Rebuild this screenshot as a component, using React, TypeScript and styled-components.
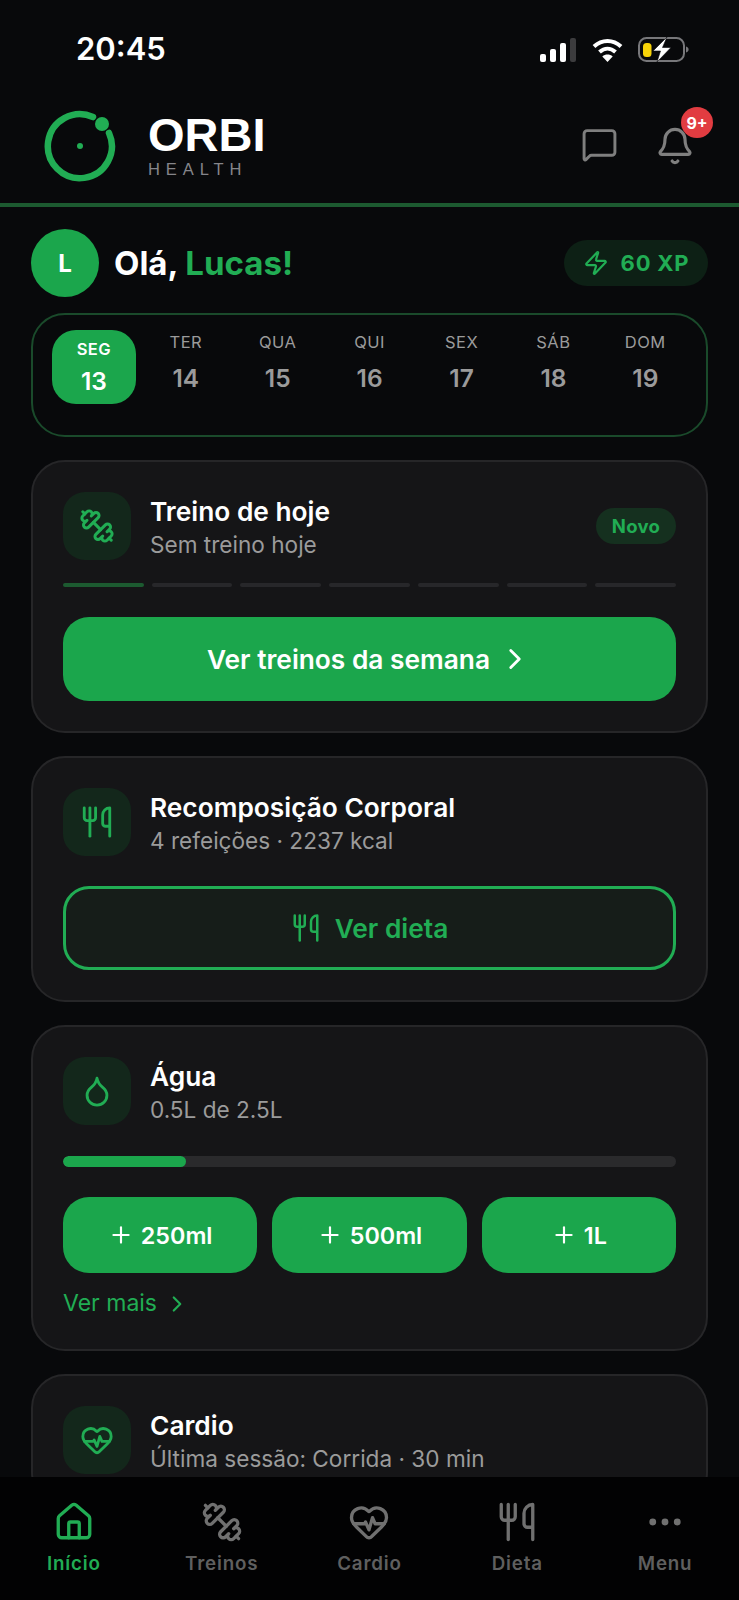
import React from 'react';
import styled, { createGlobalStyle } from 'styled-components';
import { Bell, ChevronRight, Droplet, Dumbbell, Ellipsis, HeartPulse, House, MessageSquare, Plus, Utensils, Zap } from 'lucide-react';

const GREEN = '#1ba64c';
const GREEN_TEXT = '#21ad54';
const GREY = '#9b9b9b';

const GlobalStyle = createGlobalStyle`
  html, body {
    margin: 0;
    padding: 0;
    background: #08090b;
  }
  * {
    box-sizing: border-box;
  }
`;

const Screen = styled.div`
  width: 739px;
  height: 1600px;
  display: flex;
  flex-direction: column;
  overflow: hidden;
  background: #08090b;
  color: #fff;
  font-family: 'Inter', 'Liberation Sans', sans-serif;
`;

const StatusBar = styled.div`
  height: 100px;
  flex: none;
  display: flex;
  justify-content: space-between;
  align-items: flex-start;
  padding: 30px 50px 0 76px;
`;

const Clock = styled.span`
  font-size: 31px;
  font-weight: 600;
  line-height: 38px;
`;

const StatusIcons = styled.div`
  display: flex;
  align-items: center;
  gap: 15px;
  padding-top: 7px;
`;

const Header = styled.header`
  height: 107px;
  flex: none;
  display: flex;
  align-items: flex-start;
  justify-content: space-between;
  padding: 9px 44px 0 43px;
  border-bottom: 4px solid #1c5a30;
`;

const Brand = styled.div`
  display: flex;
  gap: 31px;
`;

const BrandName = styled.div`
  display: flex;
  flex-direction: column;
  padding-top: 2px;
`;

const BrandTitle = styled.span`
  font-family: 'Liberation Sans', sans-serif;
  font-weight: 700;
  font-size: 47px;
  line-height: 47px;
`;

const BrandSub = styled.span`
  font-family: 'Liberation Sans', sans-serif;
  font-size: 16.5px;
  line-height: 18px;
  letter-spacing: 5.9px;
  color: #85858a;
  margin-top: 2px;
`;

const HeaderActions = styled.div`
  display: flex;
  align-items: flex-start;
  gap: 37px;
  padding-top: 17px;
  color: #7f7f7f;
`;

const BellWrap = styled.div`
  position: relative;
  height: 40px;
`;

const Badge = styled.span`
  position: absolute;
  top: -19px;
  right: -18px;
  width: 32px;
  height: 31px;
  border-radius: 50%;
  background: #e13c41;
  color: #fff;
  font-size: 16px;
  font-weight: 700;
  display: flex;
  align-items: center;
  justify-content: center;
`;

const Main = styled.main`
  flex: 1;
  min-height: 0;
  overflow: hidden;
  padding: 22px 31px 0;
  display: flex;
  flex-direction: column;
`;

const Greeting = styled.div`
  display: flex;
  align-items: center;
  justify-content: space-between;
  margin-bottom: 16px;
`;

const GreetingLeft = styled.div`
  display: flex;
  align-items: center;
  gap: 15px;
`;

const Avatar = styled.div`
  width: 68px;
  height: 68px;
  border-radius: 50%;
  background: ${GREEN};
  display: flex;
  align-items: center;
  justify-content: center;
  font-size: 24px;
  font-weight: 700;
`;

const Hello = styled.h1`
  margin: 0;
  font-size: 33px;
  font-weight: 700;
  span {
    color: ${GREEN_TEXT};
  }
`;

const XpPill = styled.div`
  width: 144px;
  height: 46px;
  border-radius: 23px;
  background: #0d2015;
  color: ${GREEN_TEXT};
  display: flex;
  align-items: center;
  justify-content: center;
  gap: 12px;
  font-size: 22px;
  font-weight: 700;
  letter-spacing: 0.8px;
`;

const Calendar = styled.section`
  height: 124px;
  flex: none;
  margin-bottom: 23px;
  border: 2px solid #1a4a2b;
  border-radius: 34px;
  padding: 15px 19px;
  display: grid;
  grid-template-columns: repeat(7, 83.9px);
  gap: 8px;
  align-items: start;
`;

const Day = styled.div<{ $active?: boolean }>`
  height: 74px;
  border-radius: 24px;
  display: flex;
  flex-direction: column;
  align-items: center;
  padding-top: ${(p) => (p.$active ? '7px' : '0')};
  background: ${(p) => (p.$active ? GREEN : 'transparent')};
`;

const DayName = styled.span<{ $active?: boolean }>`
  font-size: 16.5px;
  line-height: 24px;
  letter-spacing: 0.5px;
  font-weight: ${(p) => (p.$active ? 600 : 400)};
  color: ${(p) => (p.$active ? '#fff' : GREY)};
`;

const DayNumber = styled.span<{ $active?: boolean }>`
  font-size: 24.5px;
  line-height: 30px;
  font-weight: 600;
  margin-top: ${(p) => (p.$active ? '5px' : '9px')};
  color: ${(p) => (p.$active ? '#fff' : GREY)};
`;

const Card = styled.section`
  flex: none;
  background: #151517;
  border: 2px solid #262628;
  border-radius: 34px;
  padding: 30px;
  margin-bottom: 23px;
`;

const CardHead = styled.div`
  display: flex;
  align-items: center;
  gap: 19px;
`;

const IconTile = styled.div`
  width: 68px;
  height: 68px;
  flex: none;
  border-radius: 22px;
  background: #13271b;
  color: ${GREEN_TEXT};
  display: flex;
  align-items: center;
  justify-content: center;
`;

const CardText = styled.div`
  flex: 1;
  display: flex;
  flex-direction: column;
  gap: 2px;
  padding-top: 3px;
`;

const CardTitle = styled.h2`
  margin: 0;
  font-size: 26.3px;
  line-height: 33px;
  font-weight: 600;
`;

const CardSub = styled.p`
  margin: 0;
  font-size: 22.6px;
  line-height: 30px;
  color: ${GREY};
`;

const NewTag = styled.span`
  width: 80px;
  height: 36px;
  border-radius: 18px;
  background: #15301f;
  color: ${GREEN_TEXT};
  font-size: 18.5px;
  font-weight: 700;
  letter-spacing: 0.3px;
  display: flex;
  align-items: center;
  justify-content: center;
`;

const Segments = styled.div`
  display: grid;
  grid-template-columns: repeat(7, 1fr);
  gap: 8px;
  margin-top: 23px;
`;

const Segment = styled.div<{ $done?: boolean }>`
  height: 4px;
  border-radius: 2px;
  background: ${(p) => (p.$done ? '#1c5a30' : '#27272a')};
`;

const PrimaryButton = styled.div`
  height: 84px;
  margin-top: 30px;
  border-radius: 26px;
  background: ${GREEN};
  display: flex;
  align-items: center;
  justify-content: center;
  gap: 8px;
  font-size: 26.3px;
  font-weight: 600;
`;

const OutlineButton = styled.div`
  height: 84px;
  margin-top: 30px;
  border-radius: 26px;
  border: 3px solid ${GREEN_TEXT};
  background: #161d19;
  color: ${GREEN_TEXT};
  display: flex;
  align-items: center;
  justify-content: center;
  gap: 14px;
  font-size: 26.3px;
  font-weight: 600;
`;

const Track = styled.div`
  height: 11px;
  margin-top: 31px;
  border-radius: 6px;
  background: #2a2a2c;
  overflow: hidden;
`;

const TrackFill = styled.div`
  height: 100%;
  border-radius: 6px;
  background: ${GREEN};
`;

const QuickRow = styled.div`
  display: grid;
  grid-template-columns: repeat(3, 1fr);
  gap: 15px;
  margin-top: 30px;
`;

const QuickButton = styled.div`
  height: 76px;
  border-radius: 26px;
  background: ${GREEN};
  display: flex;
  align-items: center;
  justify-content: center;
  gap: 7px;
  font-size: 23.3px;
  font-weight: 600;
`;

const MoreLink = styled.div`
  display: flex;
  align-items: center;
  gap: 7px;
  margin-top: 15px;
  font-size: 23px;
  line-height: 31px;
  color: ${GREEN_TEXT};
`;

const Nav = styled.nav`
  height: 123px;
  flex: none;
  background: #020203;
  display: grid;
  grid-template-columns: repeat(5, 1fr);
  padding-top: 24px;
`;

const NavItem = styled.div<{ $active?: boolean }>`
  display: flex;
  flex-direction: column;
  align-items: center;
  gap: 9px;
  color: ${(p) => (p.$active ? GREEN_TEXT : '#707070')};
`;

const NavLabel = styled.span<{ $active?: boolean }>`
  color: ${(p) => (p.$active ? GREEN_TEXT : '#5f5f5f')};
  font-size: 18.8px;
  font-weight: 600;
  letter-spacing: 0.8px;
`;

// the reference draws the dumbbell from top left to bottom right
const FlippedDumbbell = styled(Dumbbell)`
  transform: scaleX(-1);
`;

const SignalIcon = () => (
  <svg width="37" height="24" viewBox="0 0 37 24">
    <rect x="0" y="16" width="6" height="8" rx="2" fill="#fff" />
    <rect x="10" y="11" width="6" height="13" rx="2" fill="#fff" />
    <rect x="20" y="5" width="6" height="19" rx="2" fill="#fff" />
    <rect x="30" y="0" width="6" height="24" rx="2" fill="#3c3c3e" />
  </svg>
);

const WifiIcon = () => (
  <svg width="31" height="24" viewBox="0 0 31 24" fill="none" stroke="#fff" strokeWidth="4">
    <path d="M2 8.500C10 1 21 1 29 8.500" />
    <path d="M7.500 14c5-4.500 11-4.500 16 0" />
    <path d="M15.500 24l-5.200-5.600c3-2.400 7.400-2.400 10.400 0z" fill="#fff" stroke="none" />
  </svg>
);

const BatteryIcon = () => (
  <svg width="51" height="25" viewBox="0 0 51 25" fill="none">
    <rect x="1" y="1" width="45" height="23" rx="7.500" stroke="#77777a" strokeWidth="2" />
    <path d="M48 9.500c1.800.6 2.600 1.800 2.600 3s-.8 2.400-2.600 3z" fill="#77777a" />
    <rect x="5" y="6" width="8.500" height="14" rx="3.500" fill="#f7d308" />
    <path d="M29 0L15 14h7.500L19 25l14-14.500h-8.500z" fill="#fff" stroke="#08090b" strokeWidth="0.6" />
  </svg>
);

const OrbiLogo = () => (
  <svg width="74" height="74" viewBox="0 0 74 74" fill="none">
    <path d="M50 8A32 32 0 1 0 66 24" stroke={GREEN_TEXT} strokeWidth="6.500" strokeLinecap="round" />
    <circle cx="59" cy="15" r="7" fill={GREEN_TEXT} />
    <circle cx="37" cy="37" r="3" fill={GREEN_TEXT} />
  </svg>
);

const days = [
  { name: 'SEG', number: 13, active: true },
  { name: 'TER', number: 14 },
  { name: 'QUA', number: 15 },
  { name: 'QUI', number: 16 },
  { name: 'SEX', number: 17 },
  { name: 'SÁB', number: 18 },
  { name: 'DOM', number: 19 },
];

const App = () => {
  return (
    <Screen>
      <GlobalStyle />
      <StatusBar>
        <Clock>20:45</Clock>
        <StatusIcons>
          <SignalIcon />
          <WifiIcon />
          <BatteryIcon />
        </StatusIcons>
      </StatusBar>

      <Header>
        <Brand>
          <OrbiLogo />
          <BrandName>
            <BrandTitle>ORBI</BrandTitle>
            <BrandSub>HEALTH</BrandSub>
          </BrandName>
        </Brand>
        <HeaderActions>
          <MessageSquare size={37} strokeWidth={1.9} />
          <BellWrap>
            <Bell size={40} strokeWidth={1.9} />
            <Badge>9+</Badge>
          </BellWrap>
        </HeaderActions>
      </Header>

      <Main>
        <Greeting>
          <GreetingLeft>
            <Avatar>L</Avatar>
            <Hello>
              Olá, <span>Lucas!</span>
            </Hello>
          </GreetingLeft>
          <XpPill>
            <Zap size={26} strokeWidth={2} />
            60 XP
          </XpPill>
        </Greeting>

        <Calendar>
          {days.map((day) => (
            <Day key={day.name} $active={day.active}>
              <DayName $active={day.active}>{day.name}</DayName>
              <DayNumber $active={day.active}>{day.number}</DayNumber>
            </Day>
          ))}
        </Calendar>

        <Card>
          <CardHead>
            <IconTile>
              <FlippedDumbbell size={36} strokeWidth={2} />
            </IconTile>
            <CardText>
              <CardTitle>Treino de hoje</CardTitle>
              <CardSub>Sem treino hoje</CardSub>
            </CardText>
            <NewTag>Novo</NewTag>
          </CardHead>
          <Segments>
            {days.map((day) => (
              <Segment key={day.name} $done={day.active} />
            ))}
          </Segments>
          <PrimaryButton>
            Ver treinos da semana
            <ChevronRight size={34} strokeWidth={2} />
          </PrimaryButton>
        </Card>

        <Card>
          <CardHead>
            <IconTile>
              <Utensils size={34} strokeWidth={2} />
            </IconTile>
            <CardText>
              <CardTitle>Recomposição Corporal</CardTitle>
              <CardSub>4 refeições · 2237 kcal</CardSub>
            </CardText>
          </CardHead>
          <OutlineButton>
            <Utensils size={30} strokeWidth={2} />
            Ver dieta
          </OutlineButton>
        </Card>

        <Card>
          <CardHead>
            <IconTile>
              <Droplet size={34} strokeWidth={2} />
            </IconTile>
            <CardText>
              <CardTitle>Água</CardTitle>
              <CardSub>0.5L de 2.5L</CardSub>
            </CardText>
          </CardHead>
          <Track>
            <TrackFill style={{ width: `${(0.5 / 2.5) * 100}%` }} />
          </Track>
          <QuickRow>
            <QuickButton>
              <Plus size={26} strokeWidth={2} />
              250ml
            </QuickButton>
            <QuickButton>
              <Plus size={26} strokeWidth={2} />
              500ml
            </QuickButton>
            <QuickButton>
              <Plus size={26} strokeWidth={2} />
              1L
            </QuickButton>
          </QuickRow>
          <MoreLink>
            Ver mais
            <ChevronRight size={26} strokeWidth={2} />
          </MoreLink>
        </Card>

        <Card>
          <CardHead>
            <IconTile>
              <HeartPulse size={34} strokeWidth={2} />
            </IconTile>
            <CardText>
              <CardTitle>Cardio</CardTitle>
              <CardSub>Última sessão: Corrida · 30 min</CardSub>
            </CardText>
          </CardHead>
        </Card>
      </Main>

      <Nav>
        <NavItem $active>
          <House size={42} strokeWidth={1.9} />
          <NavLabel $active>Início</NavLabel>
        </NavItem>
        <NavItem>
          <FlippedDumbbell size={42} strokeWidth={1.9} />
          <NavLabel>Treinos</NavLabel>
        </NavItem>
        <NavItem>
          <HeartPulse size={42} strokeWidth={1.9} />
          <NavLabel>Cardio</NavLabel>
        </NavItem>
        <NavItem>
          <Utensils size={42} strokeWidth={1.9} />
          <NavLabel>Dieta</NavLabel>
        </NavItem>
        <NavItem>
          <Ellipsis size={42} strokeWidth={1.9} />
          <NavLabel>Menu</NavLabel>
        </NavItem>
      </Nav>
    </Screen>
  );
};

export default App;
